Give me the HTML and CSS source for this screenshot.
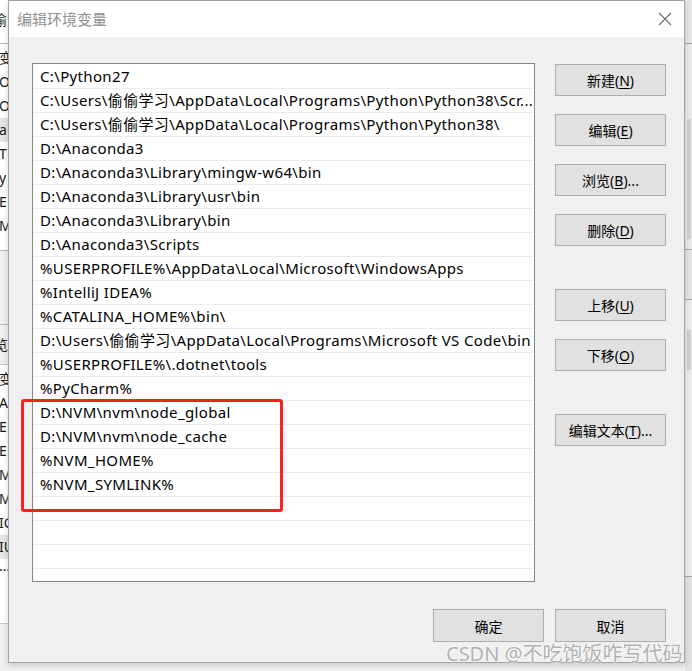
FILE: index.html
```html
<!DOCTYPE html>
<html lang="zh-CN">
<head>
<meta charset="utf-8">
<title>编辑环境变量</title>
<link rel="stylesheet" href="styles.css">
</head>
<body>
<div class="desk">
  <div class="bg-left">
    <div class="bgl-head"><span>偷</span></div>
    <div class="bgl-list">
      <div class="bgl-row">变</div>
      <div class="bgl-row">Or</div>
      <div class="bgl-row">Or</div>
      <div class="bgl-row sel">a</div>
      <div class="bgl-row">T</div>
      <div class="bgl-row">y</div>
      <div class="bgl-row">E</div>
      <div class="bgl-row">M</div>
    </div>
    <div class="bgl-gap"></div>
    <div class="bgl-head2">览</div>
    <div class="bgl-list2">
      <div class="bgl-row">变</div>
      <div class="bgl-row">A</div>
      <div class="bgl-row">E</div>
      <div class="bgl-row">E</div>
      <div class="bgl-row">M</div>
      <div class="bgl-row">MI</div>
      <div class="bgl-row">IC</div>
      <div class="bgl-row sel">IU</div>
      <div class="bgl-row dots">…</div>
    </div>
    <div class="bgl-foot"></div>
  </div>

  <div class="mid">
    <div class="dialog">
      <div class="titlebar">
        <span class="title">编辑环境变量</span>
        <svg class="close" width="14" height="14" viewBox="0 0 14 14"><path d="M1 1 L13 13 M13 1 L1 13" stroke="#6b6b6b" stroke-width="1.1" fill="none"/></svg>
      </div>
      <div class="body">
        <div class="main">
          <div class="listbox">
            <div class="row">C:\Python27</div>
            <div class="row">C:\Users\偷偷学习\AppData\Local\Programs\Python\Python38\Scr...</div>
            <div class="row">C:\Users\偷偷学习\AppData\Local\Programs\Python\Python38\</div>
            <div class="row">D:\Anaconda3</div>
            <div class="row">D:\Anaconda3\Library\mingw-w64\bin</div>
            <div class="row">D:\Anaconda3\Library\usr\bin</div>
            <div class="row">D:\Anaconda3\Library\bin</div>
            <div class="row">D:\Anaconda3\Scripts</div>
            <div class="row">%USERPROFILE%\AppData\Local\Microsoft\WindowsApps</div>
            <div class="row">%IntelliJ IDEA%</div>
            <div class="row">%CATALINA_HOME%\bin\</div>
            <div class="row">D:\Users\偷偷学习\AppData\Local\Programs\Microsoft VS Code\bin</div>
            <div class="row">%USERPROFILE%\.dotnet\tools</div>
            <div class="row">%PyCharm%</div>
            <div class="row">D:\NVM\nvm\node_global</div>
            <div class="row">D:\NVM\nvm\node_cache</div>
            <div class="row">%NVM_HOME%</div>
            <div class="row">%NVM_SYMLINK%</div>
            <div class="row"></div>
            <div class="row"></div>
            <div class="row"></div>
          </div>
          <div class="side">
            <button class="btn">新建(<u>N</u>)</button>
            <button class="btn">编辑(<u>E</u>)</button>
            <button class="btn">浏览(<u>B</u>)...</button>
            <button class="btn">删除(<u>D</u>)</button>
            <button class="btn sep">上移(<u>U</u>)</button>
            <button class="btn">下移(<u>O</u>)</button>
            <button class="btn sep">编辑文本(<u>T</u>)...</button>
          </div>
        </div>
        <div class="footer">
          <button class="btn">确定</button>
          <button class="btn">取消</button>
        </div>
      </div>
    </div>
    <div class="bg-bottom"></div>
  </div>

  <div class="bg-right">
    <div class="bgr-a"></div>
    <div class="bgr-b"><div class="bgr-thumb"></div></div>
    <div class="bgr-c"></div>
    <div class="bgr-d"><div class="bgr-thumb2"></div></div>
    <div class="bgr-e"></div>
  </div>

  <div class="highlight"></div>
  <div class="watermark">CSDN @不吃饱饭咋写代码</div>
</div>
</body>
</html>
```

FILE: styles.css
```css
* { box-sizing: border-box; }
html, body { margin: 0; padding: 0; }
body {
  width: 692px;
  height: 671px;
  overflow: hidden;
  background: #f0f0f0;
  font-family: "Noto Sans", "Noto Sans CJK SC", sans-serif;
}
.desk {
  position: relative;
  width: 692px;
  height: 671px;
  display: flex;
  overflow: hidden;
}

/* background window on the left */
.bg-left {
  width: 8px;
  flex: none;
  display: flex;
  flex-direction: column;
  overflow: hidden;
  background: #fff;
  font-size: 14px;
  color: #1a1a1a;
  white-space: nowrap;
}
.bgl-head {
  height: 44px;
  border-bottom: 1px solid #b9b9b9;
  padding-top: 9px;
  font-family: "Noto Sans CJK SC", sans-serif;
}
.bgl-head span { margin-left: -7px; }
.bgl-list { padding-top: 2px; }
.bgl-row {
  height: 24px;
  line-height: 24px;
  margin-left: -1px;
  font-family: "Noto Sans", "Noto Sans CJK SC", sans-serif;
}
.bgl-row.sel { background: #e5e5e5; }
.bgl-row.dots { line-height: 14px; }
.bgl-gap {
  height: 75px;
  margin-top: 12px;
  border-top: 1px solid #b9b9b9;
  border-bottom: 1px solid #b9b9b9;
  background: #f0f0f0;
}
.bgl-head2 {
  height: 40px;
  line-height: 38px;
  margin-left: -6px;
  border-bottom: 1px solid #c8c8c8;
  background: #f0f0f0;
  font-family: "Noto Sans CJK SC", sans-serif;
}
.bgl-list2 { padding-top: 2px; }
.bgl-foot {
  flex: 1;
  margin-top: 40px;
  border-top: 1px solid #c8c8c8;
  background: #f0f0f0;
}

/* middle column */
.mid {
  width: 677px;
  flex: none;
  display: flex;
  flex-direction: column;
}
.dialog {
  height: 663px;
  border: 1px solid #a3a3a3;
  background: #f0f0f0;
  display: flex;
  flex-direction: column;
  box-shadow: 0 2px 6px rgba(0,0,0,0.18);
  z-index: 1;
}
.bg-bottom {
  flex: 1;
  background: #f0f0f0;
}
.titlebar {
  height: 36px;
  flex: none;
  background: #fff;
  display: flex;
  align-items: center;
  padding: 0 12px 0 8px;
  justify-content: space-between;
}
.title {
  font-family: "Noto Sans CJK SC", sans-serif;
  font-size: 15px;
  color: #8f8f8f;
  margin-top: -1px;
}
.close { margin-top: -1px; }

.body {
  flex: 1;
  display: flex;
  flex-direction: column;
  padding-top: 26px;
}
.main {
  display: flex;
  gap: 20px;
  padding-left: 23px;
}
.listbox {
  width: 503px;
  height: 519px;
  flex: none;
  background: #fff;
  border: 1px solid #828790;
  padding-top: 1px;
  overflow: hidden;
}
.row {
  height: 24px;
  border-bottom: 1px solid #ececec;
  padding-left: 7px;
  font-size: 15px;
  letter-spacing: 0.35px;
  line-height: 23px;
  color: #000;
  white-space: nowrap;
  overflow: hidden;
}
.side {
  display: flex;
  flex-direction: column;
  gap: 18px;
  padding-top: 1px;
}
.btn {
  width: 111px;
  height: 32px;
  background: #e1e1e1;
  border: 1px solid #adadad;
  border-radius: 0;
  padding: 0;
  margin: 0;
  font-family: "Noto Sans", "Noto Sans CJK SC", sans-serif;
  font-size: 14px;
  color: #000;
  display: flex;
  align-items: center;
  justify-content: center;
}
.btn u { text-decoration-thickness: 1px; text-underline-offset: 2px; }
.btn.sep { margin-top: 25px; }
.footer {
  display: flex;
  justify-content: flex-end;
  gap: 11px;
  padding-right: 18px;
  margin-top: 27px;
}
.footer .btn { height: 33px; }

/* background window on the right */
.bg-right {
  flex: 1;
  display: flex;
  flex-direction: column;
  background: #e8e8e8;
}
.bgr-a { height: 44px; border-bottom: 1px solid #9d9d9d; background: #e6e6e6; }
.bgr-b { height: 206px; border-bottom: 1px solid #a8a8a8; background: #eaeaea; padding: 5px 0 0 2px; }
.bgr-thumb { width: 4px; height: 120px; margin-top: 70px; background: #d2d2d2; }
.bgr-c { height: 50px; border-bottom: 1px solid #a8a8a8; background: #e4e4e4; }
.bgr-d { height: 277px; border-bottom: 1px solid #a8a8a8; background: #ececec; padding: 5px 0 0 2px; }
.bgr-thumb2 { width: 4px; height: 40px; margin-top: 25px; background: #cfcfcf; }
.bgr-e { flex: 1; background: #e2e2e2; }

/* annotation overlays */
.highlight {
  position: absolute;
  left: 21px;
  top: 399px;
  width: 262px;
  height: 113px;
  border: 3px solid #fb2318;
  border-radius: 3px;
  z-index: 2;
}
.watermark {
  position: absolute;
  left: 446px;
  top: 638px;
  font-family: "Noto Sans", "Noto Sans CJK SC", sans-serif;
  font-size: 20px;
  color: rgba(150,150,150,0.75);
  text-shadow: 0 0 2px #fff, 0 0 1px #fff;
  white-space: nowrap;
  z-index: 3;
}
```
